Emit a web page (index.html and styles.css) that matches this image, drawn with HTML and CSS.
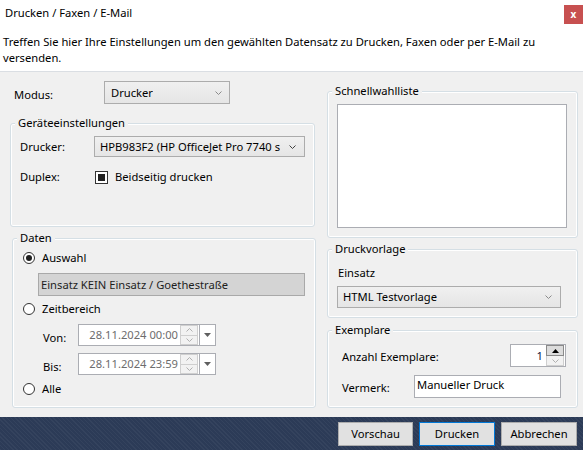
FILE: index.html
```html
<!DOCTYPE html>
<html lang="de">
<head>
<meta charset="utf-8">
<title>Drucken / Faxen / E-Mail</title>
<link rel="stylesheet" href="styles.css">
</head>
<body>
<div class="window">
  <header class="head">
    <div class="titlebar">
      <span class="title">Drucken / Faxen / E-Mail</span>
      <span class="close">x</span>
    </div>
    <p class="desc">Treffen Sie hier Ihre Einstellungen um den gewählten Datensatz zu Drucken, Faxen oder per E-Mail zu<br>versenden.</p>
  </header>

  <main class="content">
    <div class="col-left">
      <div class="row modus">
        <span class="lbl-modus">Modus:</span>
        <div class="combo c-modus">
          <span class="ctext">Drucker</span>
          <svg class="chev" width="7" height="4" viewBox="0 0 7 4"><path d="M0.5 0.5L3.5 3.5L6.5 0.5" fill="none" stroke="#8a8a8a"/></svg>
        </div>
      </div>

      <fieldset class="group g-geraete">
        <legend>Geräteeinstellungen</legend>
        <div class="gbody">
          <div class="row r-drucker">
            <span class="flbl">Drucker:</span>
            <div class="combo c-drucker">
              <span class="ctext">HPB983F2 (HP OfficeJet Pro 7740 s</span>
              <svg class="chev" width="7" height="4" viewBox="0 0 7 4"><path d="M0.5 0.5L3.5 3.5L6.5 0.5" fill="none" stroke="#404040"/></svg>
            </div>
          </div>
          <div class="row r-duplex">
            <span class="flbl">Duplex:</span>
            <span class="check"></span>
            <span class="clbl">Beidseitig drucken</span>
          </div>
        </div>
      </fieldset>

      <fieldset class="group g-daten">
        <legend>Daten</legend>
        <div class="gbody">
          <div class="row r-radio r-auswahl"><span class="radio on"></span><span>Auswahl</span></div>
          <div class="selbox">Einsatz KEIN Einsatz / Goethestraße</div>
          <div class="row r-radio r-zeit"><span class="radio"></span><span>Zeitbereich</span></div>
          <div class="row r-date r-von">
            <span class="dlbl">Von:</span>
            <div class="dt">
              <span class="dt-text">28.11.2024 00:00</span>
              <span class="dt-spin">
                <span class="sbtn"><svg width="7" height="4" viewBox="0 0 7 4"><path d="M0.5 3.5L3.5 0.5L6.5 3.5" fill="none" stroke="#b0b0b0"/></svg></span>
                <span class="sbtn"><svg width="7" height="4" viewBox="0 0 7 4"><path d="M0.5 0.5L3.5 3.5L6.5 0.5" fill="none" stroke="#b0b0b0"/></svg></span>
              </span>
              <span class="dt-drop"><svg width="7" height="4" viewBox="0 0 7 4"><path d="M0 0H7L3.5 4Z" fill="#606060"/></svg></span>
            </div>
          </div>
          <div class="row r-date r-bis">
            <span class="dlbl">Bis:</span>
            <div class="dt">
              <span class="dt-text">28.11.2024 23:59</span>
              <span class="dt-spin">
                <span class="sbtn"><svg width="7" height="4" viewBox="0 0 7 4"><path d="M0.5 3.5L3.5 0.5L6.5 3.5" fill="none" stroke="#b0b0b0"/></svg></span>
                <span class="sbtn"><svg width="7" height="4" viewBox="0 0 7 4"><path d="M0.5 0.5L3.5 3.5L6.5 0.5" fill="none" stroke="#b0b0b0"/></svg></span>
              </span>
              <span class="dt-drop"><svg width="7" height="4" viewBox="0 0 7 4"><path d="M0 0H7L3.5 4Z" fill="#606060"/></svg></span>
            </div>
          </div>
          <div class="row r-radio r-alle"><span class="radio"></span><span>Alle</span></div>
        </div>
      </fieldset>
    </div>

    <div class="col-right">
      <fieldset class="group g-schnell">
        <legend>Schnellwahlliste</legend>
        <div class="listbox"></div>
      </fieldset>

      <fieldset class="group g-vorlage">
        <legend>Druckvorlage</legend>
        <div class="gbody">
          <div class="vlbl">Einsatz</div>
          <div class="combo c-vorlage">
            <span class="ctext">HTML Testvorlage</span>
            <svg class="chev" width="7" height="4" viewBox="0 0 7 4"><path d="M0.5 0.5L3.5 3.5L6.5 0.5" fill="none" stroke="#8a8a8a"/></svg>
          </div>
        </div>
      </fieldset>

      <fieldset class="group g-exemplare">
        <legend>Exemplare</legend>
        <div class="gbody">
          <div class="row r-anzahl">
            <span class="elbl w-anzahl">Anzahl Exemplare:</span>
            <div class="spin">
              <span class="spin-val">1</span>
              <span class="spin-btns">
                <span class="ubtn active"><svg width="7" height="4" viewBox="0 0 7 4"><path d="M0 4H7L3.5 0Z" fill="#000"/></svg></span>
                <span class="ubtn"><svg width="7" height="4" viewBox="0 0 7 4"><path d="M0.5 0.5L3.5 3.5L6.5 0.5" fill="none" stroke="#b0b0b0"/></svg></span>
              </span>
            </div>
          </div>
          <div class="row r-vermerk">
            <span class="elbl w-vermerk">Vermerk:</span>
            <div class="textbox">Manueller Druck</div>
          </div>
        </div>
      </fieldset>
    </div>
  </main>

  <footer class="foot">
    <button class="btn btn-vor">Vorschau</button>
    <button class="btn btn-dru">Drucken</button>
    <button class="btn btn-abb">Abbrechen</button>
  </footer>
</div>
</body>
</html>
```

FILE: styles.css
```css
* { box-sizing: border-box; }
html, body { margin: 0; padding: 0; }
body {
  width: 583px;
  height: 450px;
  overflow: hidden;
  background: #f0f0f0;
  font-family: "Noto Sans", "Liberation Sans", sans-serif;
  font-size: 11.2px;
  line-height: 16px;
  color: #000;
}
.window { display: flex; flex-direction: column; height: 450px; }

/* header */
.head { background: #fff; border-bottom: 1px solid #dadee3; }
.titlebar { display: flex; justify-content: space-between; align-items: flex-start; height: 29px; }
.title { padding: 5px 0 0 5px; }
.close {
  margin-top: 5px;
  width: 19px; height: 19px;
  background: #c75050; color: #fff;
  font-weight: 700; font-size: 10px; line-height: 18px;
  text-align: center;
}
.desc { margin: 0; padding: 5px 3px; }

/* content */
.content {
  flex: 1;
  display: grid;
  grid-template-columns: 306px 251px;
  column-gap: 11px;
  padding-left: 10px;
  align-items: start;
}
.col-left { padding-top: 9px; display: flex; flex-direction: column; }
.col-right { padding-top: 11px; display: flex; flex-direction: column; }
.row { display: flex; align-items: center; }

.modus { height: 23px; }
.lbl-modus { width: 94px; padding: 4px 0 0 4px; }

/* combobox */
.combo {
  display: flex; align-items: center; justify-content: space-between;
  border: 1px solid #acacac;
  background: linear-gradient(#f0f0f0, #e5e5e5);
  white-space: nowrap; overflow: hidden;
}
.ctext { overflow: hidden; }
.chev { flex: none; }
.c-modus { width: 126px; height: 23px; padding: 0 7px 0 6px; }
.c-drucker { width: 211px; height: 21px; padding: 0 8px 0 5px; }
.c-vorlage { width: 224px; height: 22px; padding: 0 8px 0 5px; margin: 5px 0 0 9px; }

/* group boxes */
.group {
  margin: 0; padding: 0;
  border: 1px solid #d5dfe5;
  border-radius: 3px;
  box-shadow: inset 0 0 0 1px #fff;
  min-width: 0;
}
.group legend { margin-left: 4px; padding: 0 3px; line-height: 16px; background: #f0f0f0; }

.g-geraete { margin-top: 11px; width: 305px; }
.g-geraete .gbody { padding: 5px 0 39px 9px; }
.flbl { width: 74px; }
.r-drucker { height: 21px; }
.r-duplex { height: 20px; margin-top: 10px; }
.check {
  width: 13px; height: 13px; margin-left: 1px;
  border: 1px solid #333; background: #fff;
  display: flex; align-items: center; justify-content: center;
}
.check::after { content: ""; width: 7px; height: 7px; background: #212121; }
.clbl { margin-left: 7px; }

.g-daten { margin: 3px 0 0 2px; width: 304px; }
.g-daten .gbody { padding: 4px 0 10px 10px; }
.r-radio { height: 16px; gap: 7px; }
.radio {
  width: 12px; height: 12px;
  border: 1px solid #333; border-radius: 50%; background: #fff;
  display: flex; align-items: center; justify-content: center;
}
.radio.on::after { content: ""; width: 6px; height: 6px; border-radius: 50%; background: #1f1f1f; }
.selbox {
  margin: 7px 0 0 15px;
  width: 267px; height: 23px;
  background: #d4d4d4; border: 1px solid #a9a9a9;
  padding-left: 2px;
  display: flex; align-items: center;
  color: #1e1e1e;
}
.r-zeit { margin-top: 5px; }
.r-date { height: 22px; padding-left: 20px; }
.r-von { margin-top: 7px; }
.r-bis { margin-top: 7px; }
.r-alle { margin-top: 6px; }
.dlbl { width: 35px; padding-top: 6px; }
.dt {
  display: flex; width: 138px; height: 22px;
  border: 1px solid #abadb3; background: #fff;
}
.dt-text { flex: 1; text-align: right; padding-right: 2px; color: #6d6d6d; align-self: center; white-space: nowrap; }
.dt-spin { width: 19px; display: flex; flex-direction: column; padding: 0 1px 0 0; }
.sbtn {
  flex: 1; display: flex; align-items: center; justify-content: center;
  border: 1px solid #cfcfcf; background: #f2f2f2;
}
.sbtn + .sbtn { border-top: none; }
.dt-drop {
  width: 16px; border-left: 1px solid #abadb3;
  display: flex; align-items: center; justify-content: center;
}

/* right column */
.g-schnell { width: 251px; }
.listbox {
  margin: 5px 10px 9px 9px;
  height: 124px;
  background: #fff; border: 1px solid #abadb3;
}
.g-vorlage { margin-top: 3px; width: 251px; }
.g-vorlage .gbody { padding: 0 0 9px 0; }
.vlbl { margin: 8px 0 0 10px; line-height: 16px; }

.g-exemplare { margin-top: 4px; width: 251px; }
.g-exemplare .gbody { padding: 6px 0 9px 14px; }
.r-anzahl { height: 23px; }
.r-vermerk { height: 23px; margin-top: 8px; }
.elbl { padding-top: 2px; }
.w-anzahl { width: 168px; }
.w-vermerk { width: 72px; }
.spin {
  display: flex; width: 56px; height: 23px;
  border: 1px solid #abadb3; background: #fff;
}
.spin-val { flex: 1; text-align: right; padding-right: 3px; align-self: center; color: #101040; }
.spin-btns { width: 19px; display: flex; flex-direction: column; padding: 0 1px 0 0; }
.ubtn {
  flex: 1; display: flex; align-items: center; justify-content: center;
  border: 1px solid #cfcfcf; background: #f2f2f2;
}
.ubtn.active { border-color: #8a8a8a; background: #dcdcdc; }
.ubtn + .ubtn { border-top: none; }
.textbox {
  width: 147px; height: 23px;
  border: 1px solid #abadb3; background: #fff;
  padding: 1px 0 0 2px;
}

/* footer */
.foot {
  height: 33px;
  display: flex; justify-content: flex-end; align-items: flex-start;
  gap: 6px;
  padding: 5px 6px 0 0;
  background-color: #2c3b57;
  background-image: repeating-linear-gradient(45deg, rgba(255,255,255,0.04) 0 1px, transparent 1px 3px);
}
.btn {
  height: 24px; padding: 0;
  border: 1px solid #adadad; background: #e1e1e1;
  font: inherit; color: #000;
}
.btn-vor { width: 75px; }
.btn-dru { width: 76px; border-color: #0078d7; }
.btn-abb { width: 76px; }
```
